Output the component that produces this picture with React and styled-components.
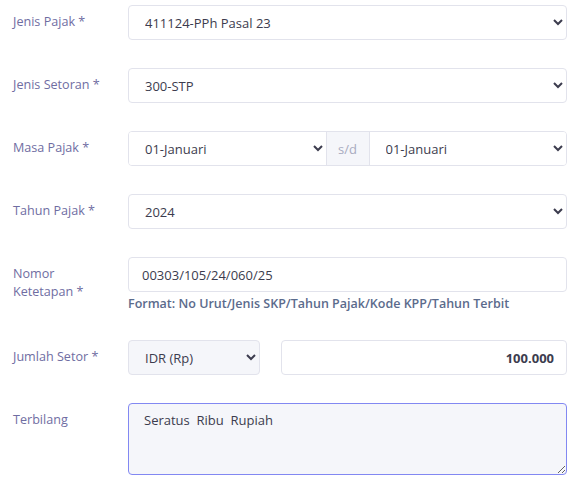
import styled, { createGlobalStyle } from "styled-components";

const GlobalStyle = createGlobalStyle`
  body {
    margin: 0;
    background: #ffffff;
    font-family: "Open Sans", "Liberation Sans", sans-serif;
  }
`;

const Form = styled.form`
  display: flex;
  flex-direction: column;
  gap: 28px;
  padding: 5px 9px 0 13px;
`;

const Row = styled.div`
  display: grid;
  grid-template-columns: 115px 1fr;
  align-items: start;
`;

const Label = styled.label`
  color: #6f6da2;
  font-size: 12.6px;
  line-height: 18px;
  padding-top: 8px;
`;

const Field = styled.div`
  display: flex;
  flex-direction: column;
  gap: 4px;
`;

const Select = styled.select`
  height: 35px;
  width: 100%;
  box-sizing: border-box;
  border: 1px solid #e2e3ec;
  border-radius: 4px;
  background-color: ${(p) => (p.$muted ? "#f5f6fa" : "#ffffff")};
  color: #3c3c4e;
  font-family: inherit;
  font-size: 13px;
  padding: 0 8px 0 12px;
  outline: none;
`;

const Input = styled.input`
  height: 35px;
  width: 100%;
  box-sizing: border-box;
  border: 1px solid #e2e3ec;
  border-radius: 4px;
  background: #ffffff;
  color: #3c3c4e;
  font-family: inherit;
  font-size: 13px;
  font-weight: ${(p) => (p.$bold ? 700 : 400)};
  text-align: ${(p) => (p.$right ? "right" : "left")};
  padding: 0 12px 0 13px;
  outline: none;
`;

const Group = styled.div`
  display: flex;
  height: 35px;
  border: 1px solid #e2e3ec;
  border-radius: 4px;
  box-sizing: border-box;
  overflow: hidden;

  select {
    border: none;
    border-radius: 0;
    height: 33px;
    flex: 1;
  }
`;

const Addon = styled.span`
  width: 42px;
  display: flex;
  align-items: center;
  justify-content: center;
  background: #f5f6fa;
  border-left: 1px solid #e2e3ec;
  border-right: 1px solid #e2e3ec;
  color: #a9abc0;
  font-size: 13px;
`;

const Help = styled.div`
  color: #5b6b8c;
  font-size: 12.5px;
  line-height: 16px;
  font-weight: 600;
`;

const Split = styled.div`
  display: grid;
  grid-template-columns: 132px 1fr;
  gap: 21px;
`;

const TextArea = styled.textarea`
  height: 72px;
  width: 100%;
  box-sizing: border-box;
  border: 1px solid #8288f2;
  border-radius: 4px;
  background: #f5f6fa;
  color: #3c3c4e;
  font-family: inherit;
  font-size: 13px;
  line-height: 18px;
  padding: 7px 15px;
  outline: none;
`;

export default function App() {
  return (
    <>
      <GlobalStyle />
      <Form>
        <Row>
          <Label>Jenis Pajak *</Label>
          <Select defaultValue="1">
            <option value="1">411124-PPh Pasal 23</option>
          </Select>
        </Row>
        <Row>
          <Label>Jenis Setoran *</Label>
          <Select defaultValue="1">
            <option value="1">300-STP</option>
          </Select>
        </Row>
        <Row>
          <Label>Masa Pajak *</Label>
          <Group>
            <Select defaultValue="1">
              <option value="1">01-Januari</option>
            </Select>
            <Addon>s/d</Addon>
            <Select defaultValue="1">
              <option value="1">01-Januari</option>
            </Select>
          </Group>
        </Row>
        <Row>
          <Label>Tahun Pajak *</Label>
          <Select defaultValue="2024">
            <option value="2024">2024</option>
          </Select>
        </Row>
        <Row>
          <Label>
            Nomor
            <br />
            Ketetapan *
          </Label>
          <Field>
            <Input defaultValue="00303/105/24/060/25" />
            <Help>Format: No Urut/Jenis SKP/Tahun Pajak/Kode KPP/Tahun Terbit</Help>
          </Field>
        </Row>
        <Row>
          <Label>Jumlah Setor *</Label>
          <Split>
            <Select $muted defaultValue="idr">
              <option value="idr">IDR (Rp)</option>
            </Select>
            <Input $bold $right defaultValue="100.000" />
          </Split>
        </Row>
        <Row>
          <Label>Terbilang</Label>
          <TextArea defaultValue="Seratus  Ribu  Rupiah" />
        </Row>
      </Form>
    </>
  );
}
